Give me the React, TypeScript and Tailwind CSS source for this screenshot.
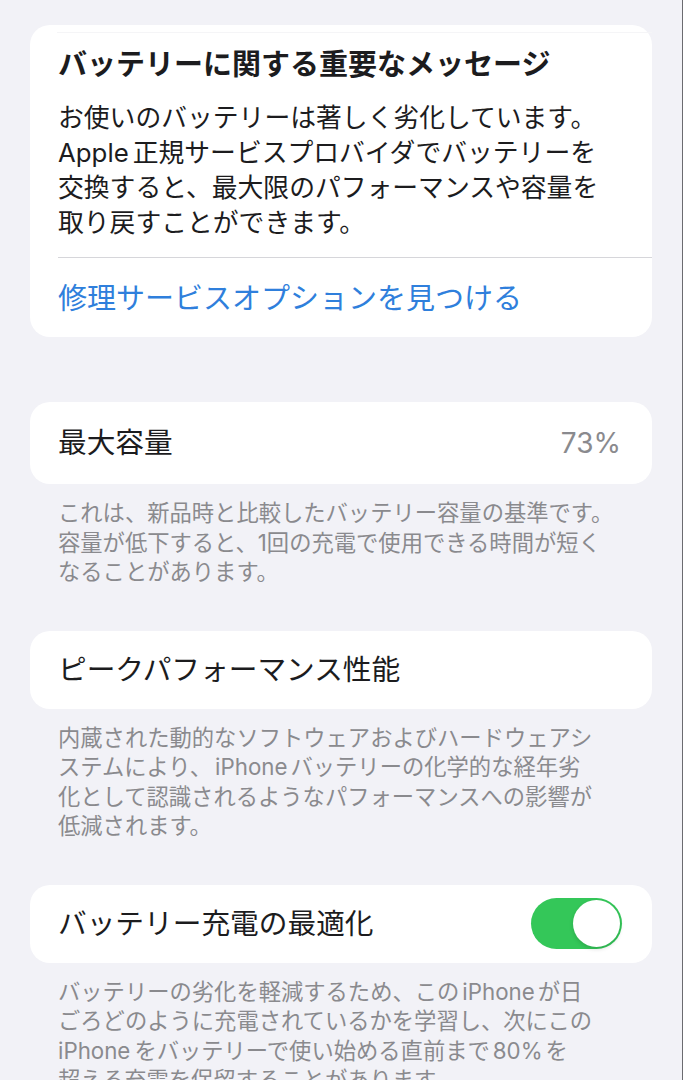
import React from 'react';

const font = { fontFamily: '"Inter", "Noto Sans CJK JP", sans-serif' };

const Latin: React.FC<{ children: React.ReactNode }> = ({ children }) => (
  <span className="mx-[3px]">{children}</span>
);

const Footer: React.FC<{ lines: React.ReactNode[] }> = ({ lines }) => (
  <div className="px-[58px] pt-[14px] text-[22.3px] leading-[29.5px] text-[#8a8a8e]">
    {lines.map((l, i) => (
      <div key={i} className="whitespace-nowrap">{l}</div>
    ))}
  </div>
);

export default function App() {
  return (
    <div
      className="min-h-[1080px] w-full overflow-hidden border-r border-[#6b6b70] bg-[#f2f2f7] px-[30px] pt-[25px] text-[#1c1c1e]"
      style={font}
    >
      {/* important message */}
      <div className="rounded-[20px] bg-white pt-[7px] pb-[20px]">
        <div className="ml-[27px] h-px bg-[#f5f5f7]" />
        <div className="mt-[14px] px-[28px] text-[29px] font-bold leading-[36px] whitespace-nowrap">
          バッテリーに関する重要なメッセージ
        </div>
        <div className="mt-[17px] px-[28px] text-[25.8px] leading-[35px]">
          <div className="whitespace-nowrap">お使いのバッテリーは著しく劣化しています。</div>
          <div className="whitespace-nowrap">Apple<span className="ml-[4px]">正規サービスプロバイダでバッテリーを</span></div>
          <div className="whitespace-nowrap">交換すると、最大限のパフォーマンスや容量を</div>
          <div className="whitespace-nowrap">取り戻すことができます。</div>
        </div>
        <div className="mt-[17px] ml-[28px] h-px bg-[#d6d6da]" />
        <div className="mt-[23px] px-[28px] text-[29px] leading-[36px] text-[#2f7fdc] whitespace-nowrap">
          修理サービスオプションを見つける
        </div>
      </div>

      {/* max capacity */}
      <div className="mt-[65px] flex h-[82px] items-center justify-between rounded-[20px] bg-white pl-[28px] pr-[31px]">
        <span className="text-[28.7px]">最大容量</span>
        <span className="text-[28px] text-[#8a8a8e]">73%</span>
      </div>
      <div className="-mx-[30px]">
        <Footer
          lines={[
            'これは、新品時と比較したバッテリー容量の基準です。',
            '容量が低下すると、1回の充電で使用できる時間が短く',
            'なることがあります。',
          ]}
        />
      </div>

      {/* peak performance */}
      <div className="mt-[44px] flex h-[78px] items-center rounded-[20px] bg-white px-[28px]">
        <span className="text-[28.7px]">ピークパフォーマンス性能</span>
      </div>
      <div className="-mx-[30px]">
        <Footer
          lines={[
            '内蔵された動的なソフトウェアおよびハードウェアシ',
            <>ステムにより、<Latin>iPhone</Latin>バッテリーの化学的な経年劣</>,
            '化として認識されるようなパフォーマンスへの影響が',
            '低減されます。',
          ]}
        />
      </div>

      {/* optimized charging */}
      <div className="mt-[44px] flex h-[78px] items-center justify-between rounded-[20px] bg-white pl-[28px] pr-[30px]">
        <span className="text-[28.7px]">バッテリー充電の最適化</span>
        <div className="flex h-[51px] w-[91px] items-center justify-end rounded-full bg-[#34c759] px-[2px]">
          <div className="h-[47px] w-[47px] rounded-full bg-white shadow-[0_2px_4px_rgba(0,0,0,0.15)]" />
        </div>
      </div>
      <div className="-mx-[30px]">
        <Footer
          lines={[
            <>バッテリーの劣化を軽減するため、この<Latin>iPhone</Latin>が日</>,
            'ごろどのように充電されているかを学習し、次にこの',
            <>iPhone<span className="ml-[4px]">をバッテリーで使い始める直前まで</span><Latin>80%</Latin>を</>,
            '超える充電を保留することがあります。',
          ]}
        />
      </div>
    </div>
  );
}
